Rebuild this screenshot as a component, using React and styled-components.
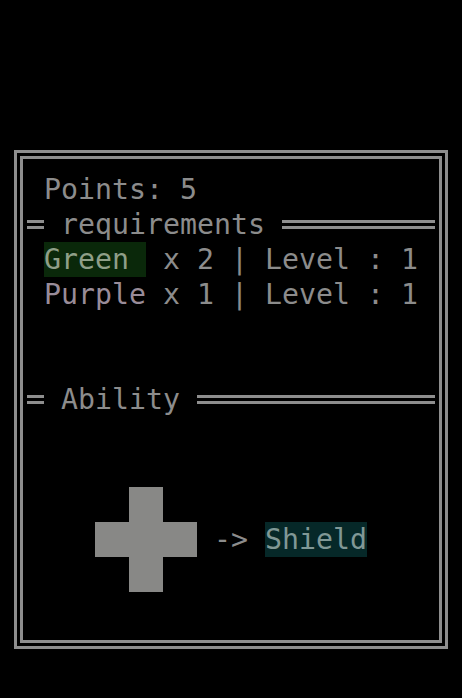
import React from "react";
import styled, { createGlobalStyle } from "styled-components";

const GlobalStyle = createGlobalStyle`
  html, body {
    margin: 0;
    padding: 0;
    background: #000;
  }
  #root {
    background: #000;
    min-height: 698px;
  }
`;

const Screen = styled.div`
  padding: 150px 0 0 14px;
  height: 698px;
  box-sizing: border-box;
  background: #000;
`;

const Frame = styled.div`
  width: 434px;
  height: 499px;
  box-sizing: border-box;
  border: 9px double #8e8e8e;
  padding: 12.5px 4px 0 4px;
  font-family: "DejaVu Sans Mono", "Liberation Mono", monospace;
  font-size: 28.24px;
  color: #8c8c8c;
`;

const Row = styled.div`
  display: flex;
  align-items: center;
  height: 35px;
  line-height: 35px;
  white-space: pre;
  padding-left: ${(p) => (p.$indent ? "17px" : "0")};
  margin-top: ${(p) => (p.$gap ? `${p.$gap * 35}px` : "0")};
`;

const Rule = styled.span`
  display: block;
  height: 3px;
  border-top: 3px solid #8e8e8e;
  border-bottom: 3px solid #8e8e8e;
  flex: ${(p) => (p.$fill ? "1 1 auto" : "0 0 17px")};
  width: ${(p) => (p.$fill ? "auto" : "17px")};
`;

const Tag = styled.span`
  display: inline-block;
  height: 35px;
  line-height: 35px;
  background: ${(p) => p.$bg || "transparent"};
  color: ${(p) => p.$fg || "inherit"};
`;

const AbilityRow = styled.div`
  display: flex;
  align-items: center;
  height: 105px;
  margin-top: 70px;
  padding-left: 68px;
  white-space: pre;
  line-height: 35px;
`;

const Arrow = styled.span`
  margin-left: 17px;
`;

function Cross() {
  return (
    <svg width="102" height="105" viewBox="0 0 102 105" style={{ display: "block" }}>
      <rect x="34" y="0" width="34" height="105" fill="#888886" />
      <rect x="0" y="35" width="102" height="35" fill="#888886" />
    </svg>
  );
}

export default function App() {
  return (
    <>
      <GlobalStyle />
      <Screen>
        <Frame>
          <Row $indent>{"Points: 5"}</Row>
          <Row>
            <Rule />
            <span>{" requirements "}</span>
            <Rule $fill />
          </Row>
          <Row $indent>
            <Tag $bg="#0a280a" $fg="#8f9f88">{"Green "}</Tag>
            <span>{" x 2 | Level : 1"}</span>
          </Row>
          <Row $indent>
            <Tag $fg="#998c99">{"Purple"}</Tag>
            <span>{" x 1 | Level : 1"}</span>
          </Row>
          <Row $gap={2}>
            <Rule />
            <span>{" Ability "}</span>
            <Rule $fill />
          </Row>
          <AbilityRow>
            <Cross />
            <Arrow>{"-> "}</Arrow>
            <Tag $bg="#062828" $fg="#809896">{"Shield"}</Tag>
          </AbilityRow>
        </Frame>
      </Screen>
    </>
  );
}
